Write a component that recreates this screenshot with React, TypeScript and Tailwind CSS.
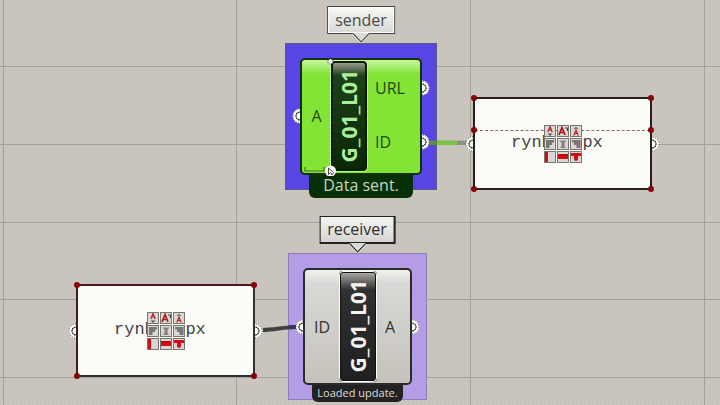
import React from "react";

const GRID_X = [3, 236, 470, 704];
const GRID_Y = [66, 144, 222, 299, 377];

function CanvasGrid() {
  return (
    <svg className="absolute inset-0 h-full w-full" aria-hidden="true">
      <defs>
        <pattern id="grain" width="4" height="4" patternUnits="userSpaceOnUse">
          <rect width="4" height="4" fill="#cac5bd" />
          <rect x="0" y="0" width="1" height="1" fill="#c1bdb6" />
          <rect x="2" y="2" width="1" height="1" fill="#c1bdb6" />
        </pattern>
      </defs>
      <rect width="100%" height="100%" fill="url(#grain)" />
      {GRID_X.map((x) => (
        <rect key={x} x={x} y="0" width="1" height="100%" fill="#a3a19c" />
      ))}
      {GRID_Y.map((y) => (
        <rect key={y} x="0" y={y} width="100%" height="1" fill="#a3a19c" />
      ))}
    </svg>
  );
}

function Wires() {
  return (
    <svg className="pointer-events-none absolute inset-0 h-full w-full" aria-hidden="true">
      <path d="M429 143H437" stroke="#5c9036" strokeWidth="4" />
      <path d="M437 143H457" stroke="#7cc444" strokeWidth="4" />
      <path d="M457 143H466" stroke="#8b918a" strokeWidth="4" />
      <path d="M429 141H466" stroke="#6c8a58" strokeWidth="1" strokeDasharray="1 1" />
      <path d="M263 330C274 330 284 327 296 327" stroke="#414141" strokeWidth="4" fill="none" />
      <path d="M289 327L296 327" stroke="#3b3068" strokeWidth="4" />
    </svg>
  );
}

function Port({ side }: { side: "left" | "right" }) {
  return (
    <svg
      viewBox="0 0 8 16"
      aria-hidden="true"
      className={
        side === "left"
          ? "absolute right-full top-1/2 mr-0.5 h-4 w-2 -translate-y-1/2"
          : "absolute left-full top-1/2 ml-0.5 h-4 w-2 -translate-y-1/2 rotate-180"
      }
    >
      <path d="M8 0.5A7.5 7.5 0 0 0 8 15.5Z" fill="#fff" />
      <path d="M8 1A7 7 0 0 0 8 15" fill="none" stroke="#333" strokeWidth="1" strokeDasharray="1 1.5" />
      <path d="M8 4A4 4 0 0 0 8 12" fill="none" stroke="#222" strokeWidth="1.2" strokeDasharray="2 0.5" />
    </svg>
  );
}

function Tag({ text, strong }: { text: string; strong?: boolean }) {
  const line = strong ? "#222" : "#444";
  return (
    <div className="absolute bottom-full left-1/2 mb-px flex -translate-x-1/2 flex-col items-center">
      <div
        className={
          strong
            ? "border border-b-2 border-r-2 border-[#222] bg-gradient-to-b from-[#f5f5f3] to-[#d6d5d2] px-[7px] text-base leading-[25px] text-[#2f2f2f]"
            : "border border-[#444] bg-gradient-to-b from-[#f8f8f6] to-[#d8d8d5] px-[7px] text-base leading-[26px] text-[#4a4a4a] outline-1 -outline-offset-2 outline-white"
        }
      >
        {text}
      </div>
      <svg viewBox="0 0 18 10" className="-mt-px h-[10px] w-[18px]" aria-hidden="true">
        <path d="M1 0L9 9L17 0Z" fill="#dadad7" />
        <path d="M1 0.5L9 9L17 0.5" fill="none" stroke="#fff" strokeWidth="2.4" />
        <path d="M1 0.5L9 9L17 0.5" fill="none" stroke={line} strokeWidth="1.1" />
      </svg>
    </div>
  );
}

function Sender() {
  return (
    <section className="absolute left-[285px] top-[43px] flex w-[152px] flex-col items-center border border-[#5a5780] bg-[#5746e4] py-[14px]">
      <Tag text="sender" />
      <div className="relative flex h-[117px] w-[122px] rounded-[5px] border-2 border-[#14300c] bg-gradient-to-b from-[#c9f59c] via-[#84e436] via-12% to-[#84e436] pb-[2px] pt-px text-base text-[#1f4a10]">
        <div className="relative flex w-[29px] items-center justify-center">
          <Port side="left" />
          A
        </div>
        <div className="flex w-9 items-center justify-center rounded-[4px] border-2 border-[#0b1d07] bg-gradient-to-b from-[#9a9a92] via-[#1e4119] via-12% to-[#0a2705] outline-1 outline-dotted outline-[#e9f7dc]">
          <h2 className="rotate-180 text-[21px] font-bold leading-[28px] text-[#a9f09a] [writing-mode:vertical-rl]">
            G_01_L01
          </h2>
        </div>
        <div className="flex flex-1 flex-col pb-0.5">
          <div className="relative flex flex-1 items-center pl-2">
            URL
            <Port side="right" />
          </div>
          <div className="relative flex flex-1 items-center pl-2">
            ID
            <Port side="right" />
          </div>
        </div>
        <svg viewBox="0 0 38 118" className="absolute -left-0.5 -top-0.5 h-[118px] w-[38px]" aria-hidden="true">
          <path d="M5 109V113H24V109" fill="none" stroke="#3f6f22" strokeWidth="1.2" />
          <path d="M30.500 5V109" stroke="#fff" strokeWidth="1" strokeDasharray="1 1" />
          <circle cx="30.500" cy="3.500" r="2.500" fill="#fff" stroke="#222" strokeWidth="1" strokeDasharray="1 1" />
          <circle cx="30.500" cy="113" r="5.500" fill="#fff" />
          <path d="M28.500 110V116.500L30.500 114.500L32 117L33.500 114.500L28.500 110Z" fill="#fff" stroke="#333" strokeWidth="0.900" />
        </svg>
      </div>
      <p className="-mb-[23px] -mt-0.5 w-[104px] rounded-b-[6px] bg-[#083006] text-center text-base leading-[25px] text-[#c4d6bd]">
        Data sent.
      </p>
    </section>
  );
}

function Receiver() {
  return (
    <section className="absolute left-[288px] top-[253px] flex w-[139px] flex-col items-center border border-[#8a7cb4] bg-[#b49ce6] py-[14px]">
      <Tag text="receiver" strong />
      <div className="relative flex h-[117px] w-[109px] rounded-[5px] border-2 border-[#2b2b2b] bg-gradient-to-b from-[#f2f2ee] via-[#d8d8d6] via-12% to-[#c6c2bb] pb-px pt-px text-base text-[#333]">
        <div className="relative flex w-[34px] items-center pl-[9px]">
          <Port side="left" />
          ID
        </div>
        <div className="flex w-[38px] items-center justify-center rounded-[4px] border-2 border-[#111] bg-gradient-to-b from-[#aaa69f] via-[#303030] via-16% to-[#202020] outline-1 -outline-offset-1 outline-white">
          <h2 className="rotate-180 text-[21px] font-bold leading-[28px] text-[#f3f3f0] [writing-mode:vertical-rl]">
            G_01_L01
          </h2>
        </div>
        <div className="relative flex flex-1 items-center pl-2">
          A
          <Port side="right" />
        </div>
      </div>
      <p className="-mb-[17px] -mt-0.5 w-[91px] rounded-b-[6px] bg-[#222] text-center text-[11px] leading-[19px] text-[#deddd9]">
        Loaded update.
      </p>
    </section>
  );
}

const TOOLS: { name: string; art: React.ReactNode }[] = [
  {
    name: "Smaller font",
    art: (
      <>
        <path d="M3.800 7L6 1.500L8.200 7M4.700 5H7.300" stroke="#b3161c" strokeWidth="1.100" fill="none" />
        <path d="M3.500 8.500H8.500L6 11Z" fill="#555" />
      </>
    ),
  },
  {
    name: "Font",
    art: (
      <>
        <path d="M2 10L5 2.500L8 10M3.200 7.500H7" stroke="#b3161c" strokeWidth="1.700" fill="none" />
        <path d="M8 3H10.500V6" stroke="#444" strokeWidth="1.200" fill="none" />
      </>
    ),
  },
  {
    name: "Larger font",
    art: (
      <>
        <path d="M3.800 10.500L6 5L8.200 10.500M4.700 8.500H7.300" stroke="#b3161c" strokeWidth="1.100" fill="none" />
        <path d="M3.500 4H8.500L6 1.500Z" fill="#777" />
      </>
    ),
  },
  {
    name: "Align left",
    art: <path d="M2 2H10V4.500H8V7H5.500V10H2Z" fill="#777" />,
  },
  {
    name: "Align centre",
    art: (
      <>
        <path d="M2.500 2.500H9.500L7.500 5V8L9 10H3L4.500 8V5Z" fill="#888" />
        <path d="M6 3V9" stroke="#b06060" strokeWidth="1" />
      </>
    ),
  },
  {
    name: "Align right",
    art: (
      <>
        <path d="M2 2H10V10H6.500V7H4V4.500H2Z" fill="#777" />
        <path d="M10.500 2V10" stroke="#c77" strokeWidth="0.800" />
      </>
    ),
  },
  {
    name: "Left edge",
    art: <rect x="0.500" y="1" width="3.500" height="10" fill="#d20d14" />,
  },
  {
    name: "Middle band",
    art: (
      <>
        <rect x="1" y="3" width="10" height="5" fill="#d20d14" />
        <path d="M2 4.500L4 3.500L6 4.500L8 3.500L10 4.500" stroke="#8f0a0f" strokeWidth="0.800" fill="none" />
      </>
    ),
  },
  {
    name: "Top band",
    art: <path d="M1 2H11V5H8V9L6 10L4 9V5H1Z" fill="#d20d14" />,
  },
];

function Handle({ place }: { place: string }) {
  return <span className={"absolute size-[6px] rounded-full bg-[#860309] " + place} />;
}

function Panel({ place, ruled }: { place: string; ruled?: boolean }) {
  return (
    <section
      className={
        "absolute grid h-[93px] w-[179px] items-center border-2 bg-[#fbfbf8] " +
        (ruled ? "border-[#262020] " : "border-[#303030] border-l-[#4a1a1c] border-t-[#4a1a1c] ") +
        place
      }
    >
      <Port side="left" />
      <Port side="right" />
      {ruled && <div className="absolute inset-x-0 top-[31px] border-t border-dashed border-[#8a6a64]" />}
      <p className="col-start-1 row-start-1 whitespace-pre pb-0.5 pl-9 font-['Liberation_Mono',monospace] text-[17px] leading-5 text-[#444]">
        {"rynh   px"}
      </p>
      <div className="relative col-start-1 row-start-1 grid grid-cols-3 gap-px justify-self-center">
        {TOOLS.map((t) => (
          <button key={t.name} type="button" aria-label={t.name} className="size-[12px] bg-[#d9d7d3]">
            <svg viewBox="0 0 12 12" className="size-[12px]" aria-hidden="true">
              {t.art}
              <rect x="0.500" y="0.500" width="11" height="11" fill="none" stroke="#77756f" />
            </svg>
          </button>
        ))}
      </div>
      <Handle place="-left-1 -top-1" />
      <Handle place="-right-1 -top-1" />
      <Handle place="-bottom-1 -left-1" />
      <Handle place="-bottom-1 -right-1" />
      {ruled && <Handle place="-left-1 top-7" />}
      {ruled && <Handle place="-right-1 top-7" />}
    </section>
  );
}

export default function App() {
  return (
    <main className="relative min-h-screen overflow-hidden bg-[#c9c4bc] font-['Open_Sans','Noto_Sans',sans-serif]">
      <CanvasGrid />
      <Sender />
      <Receiver />
      <Panel place="left-[473px] top-[97px]" ruled />
      <Panel place="left-[76px] top-[284px]" />
      <Wires />
    </main>
  );
}
